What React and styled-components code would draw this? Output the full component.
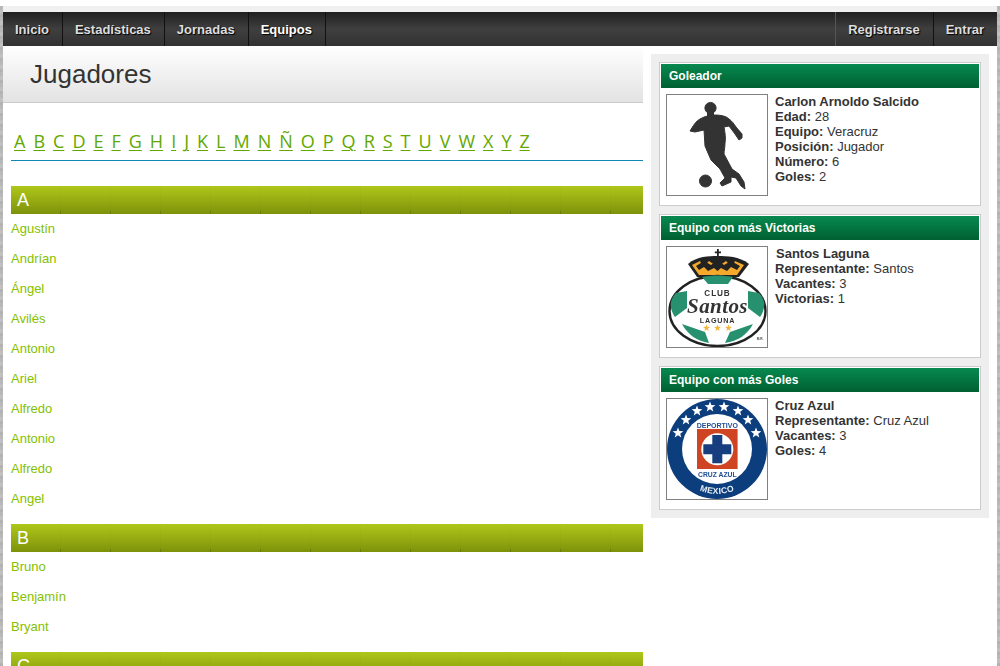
import React from "react";
import styled, { createGlobalStyle } from "styled-components";

const Global = createGlobalStyle`
  html, body { margin: 0; padding: 0; background: #fff; overflow: hidden; }
  body { font-family: "Liberation Sans", Arial, sans-serif; color: #333; }
  a { text-decoration: none; }
`;

const Page = styled.div`
  margin-top: 6px;
  height: 660px;
  overflow: hidden;
  padding: 0 3px;
  background:
    repeating-linear-gradient(0deg, rgba(0,0,0,.05) 0 3px, rgba(255,255,255,.06) 3px 7px, rgba(0,0,0,.02) 7px 11px),
    #bcbcbc;
`;
const Shell = styled.div`
  height: 100%;
  padding-top: 6px;
  background: linear-gradient(#f0f0f0 0 6px, #fff 6px);
`;
const Nav = styled.nav`
  display: flex;
  height: 34px;
  background: linear-gradient(#202020, #3f3f3f 50%, #323232);
`;
const NavItem = styled.a`
  display: flex;
  align-items: center;
  padding: 0 13px 0 12px;
  font-size: 13px;
  font-weight: 700;
  color: ${(p) => (p.$active ? "#fff" : "#ddd")};
  text-shadow: 1px 1px 1px #000;
  border-right: ${(p) => (p.$last ? "0" : "1px solid #111")};
  border-left: ${(p) => (p.$divider ? "1px solid #555" : "0")};
  margin-left: ${(p) => (p.$push ? "auto" : "0")};
`;
const Columns = styled.div`
  display: flex;
  gap: 8px;
  align-items: flex-start;
`;
const Main = styled.main`
  width: 640px;
  flex: none;
`;
const TitleBar = styled.header`
  height: 56px;
  padding-left: 27px;
  display: flex;
  align-items: center;
  background: linear-gradient(#fff, #e3e3e3);
  border-bottom: 1px solid #ccc;
  font-size: 26px;
  color: #333;
`;
const Body = styled.div`
  padding-left: 8px;
`;
const Alphabet = styled.div`
  margin-top: 25px;
  height: 33px;
  box-sizing: border-box;
  border-bottom: 1px solid #0e89b5;
  padding-left: 3px;
  display: flex;
  font-family: "Open Sans", sans-serif;
  font-size: 18px;
  line-height: 27px;
`;
const Letter = styled.a`
  color: #62a800;
  text-decoration: underline;
  text-underline-offset: 2px;
  text-decoration-thickness: 1px;
  margin-right: 8px;
`;
const SectionHead = styled.h2`
  margin: 0;
  height: 28px;
  padding-left: 6px;
  display: flex;
  align-items: center;
  font-size: 18px;
  font-weight: 400;
  color: #fff;
  background:
    repeating-linear-gradient(90deg, transparent 0 49px, rgba(0,0,0,.15) 49px 50px) 0 100% / 100% 3px no-repeat,
    repeating-linear-gradient(90deg, transparent 0 49px, rgba(0,0,0,.015) 49px 50px),
    linear-gradient(#afc71a, #7e920a);
`;
const Group = styled.section`
  margin-top: ${(p) => (p.$first ? "25px" : "10px")};
`;
const Name = styled.a`
  display: block;
  height: 30px;
  line-height: 30px;
  font-size: 13px;
  color: #84c100;
`;
const Side = styled.aside`
  width: 322px;
  padding: 8px;
  margin-top: 8px;
  background: #eee;
  display: flex;
  flex-direction: column;
  gap: 8px;
`;
const Card = styled.article`
  height: 144px;
  box-sizing: border-box;
  border: 1px solid #ccc;
  padding: 1px;
  background: #fff;
`;
const CardHead = styled.h3`
  margin: 0;
  height: 24px;
  line-height: 24px;
  padding-left: 8px;
  font-size: 12px;
  font-weight: 700;
  color: #fff;
  background: linear-gradient(#078950, #006030);
`;
const CardBody = styled.div`
  display: flex;
  gap: 7px;
  padding: 6px 0 0 5px;
`;
const Thumb = styled.div`
  width: 100px;
  height: 100px;
  flex: none;
  border: 1px solid #808080;
  background: #fff;
  overflow: hidden;
  svg { display: block; width: 100%; height: 100%; filter: blur(.35px); }
`;
const Info = styled.div`
  font-size: 13px;
  line-height: 15px;
  color: #333;
`;
const Line = styled.div`
  b { font-weight: 700; }
`;
const Heading = styled.div`
  font-weight: 700;
  padding-left: ${(p) => (p.$nudge ? "1px" : "0")};
`;

const starPath = (cx, cy, r) => {
  const pts = [];
  for (let i = 0; i < 10; i++) {
    const rad = i % 2 ? r * 0.42 : r;
    const a = -Math.PI / 2 + (i * Math.PI) / 5;
    pts.push(`${(cx + rad * Math.cos(a)).toFixed(2)},${(cy + rad * Math.sin(a)).toFixed(2)}`);
  }
  return pts.join(" ");
};

const Player = () => (
  <svg viewBox="0 0 100 100" aria-hidden="true">
    <g fill="#333" stroke="#333" strokeWidth="1" strokeLinejoin="round">
      <circle cx="43.5" cy="13" r="5.6" />
      <rect x="40.5" y="16" width="6" height="6" />
      <path d="M23 36 C26 31 29 26 33 24 C38 21 44 20 48 20 C54 20 59 21 62 24 C65 26 67 29 69 32 L75 39 L75 43 L72 45 L68 39 L62 31 L57 32 C58 38 59 43 58 48 C58 52 57 56 57 59 L65 74 L72 79 L77 87 L78 94 L74 91 L69 83 L64 82 L64 87 L55 91 L53 88 L58 83 L53 74 L44 65 L38 51 L37 35 L28 37 Z" />
      <circle cx="38.5" cy="86" r="6" />
    </g>
  </svg>
);

const Santos = () => (
  <svg viewBox="0 0 100 100" aria-hidden="true">
    <path d="M50 2 h1.8 v2.4 h2.2 v1.8 h-2.2 v3.4 h-1.8 v-3.4 h-2.2 v-1.8 h2.2 Z" fill="#222" />
    <path d="M21 17 C30 9 42 9 50.5 9 C60 9 72 9 82 17 L72 30 H30 Z" fill="#222" />
    <path d="M25 18 L33 14 L36 20 L42 14 L50.5 20 L59 14 L65 20 L68 14 L77 18 L70 28 H32 Z" fill="#f4a92c" />
    <path d="M29 19 L37 14 L44 18 L50.5 13 L57 18 L64 14 L73 19 L70 23 L64 20 L60 24 L54 21 L50.5 24 L47 21 L41 24 L37 20 L32 23 Z" fill="#222" />
    <ellipse cx="50.5" cy="64" rx="48" ry="35" fill="#fff" stroke="#222" strokeWidth="2.4" />
    <g fill="#27906f">
      <path d="M35 30 C45 28 56 28 66 30 L61 37 H41 Z" />
      <path d="M4 55 C5 51 7 48 9 46 L20 44 L20 61 L8 70 C5 66 3 60 4 55 Z" />
      <path d="M97 55 C96 51 94 48 92 46 L81 44 L81 61 L93 70 C96 66 98 60 97 55 Z" />
      <path d="M15 77 L38 85 L42 96 C30 94 21 88 15 77 Z" />
      <path d="M86 77 L63 85 L58 96 C71 94 80 88 86 77 Z" />
    </g>
    <text x="50.5" y="49" textAnchor="middle" fontFamily="Liberation Sans" fontWeight="700" fontSize="8.2" letterSpacing=".9" fill="#333">CLUB</text>
    <text x="50.5" y="66" textAnchor="middle" fontFamily="Liberation Serif" fontWeight="700" fontStyle="italic" fontSize="21" letterSpacing=".4" fill="#333">Santos</text>
    <text x="50.5" y="76" textAnchor="middle" fontFamily="Liberation Sans" fontWeight="700" fontSize="7.2" letterSpacing=".8" fill="#333">LAGUNA</text>
    <g fill="#f3b63b">
      <polygon points={starPath(39.5, 81, 3.6)} />
      <polygon points={starPath(50.5, 81, 3.6)} />
      <polygon points={starPath(61.5, 81, 3.6)} />
    </g>
    <text x="93" y="93" textAnchor="middle" fontFamily="Liberation Sans" fontWeight="700" fontSize="3.2" fill="#444">M.R.</text>
  </svg>
);

const CRUZ_STARS = [[11, 34], [19, 21], [30, 12], [43, 8], [57, 8], [71, 12], [81, 21], [89, 34]];

const Cruz = () => (
  <svg viewBox="0 0 100 100" aria-hidden="true">
    <defs>
      <path id="mx" d="M18.2 81.8 A45 45 0 0 0 81.8 81.8" />
    </defs>
    <circle cx="50" cy="50" r="50" fill="#0c3d7d" />
    <circle cx="50" cy="50" r="35" fill="#fff" />
    {CRUZ_STARS.map(([x, y]) => (
      <polygon key={x} points={starPath(x, y, 5.6)} fill="#fff" />
    ))}
    <text x="50.3" y="29" textAnchor="middle" fontFamily="Liberation Sans" fontWeight="700" fontSize="7" fill="#234f95">DEPORTIVO</text>
    <rect x="30" y="30" width="40.6" height="40" fill="#cf4524" />
    <circle cx="50.3" cy="50.3" r="16" fill="#fff" />
    <path d="M45.3 36 h10 v9.3 h9 v10 h-9 v9 h-10 v-9 h-9 v-10 h9 Z" fill="#173f7f" />
    <text x="50.3" y="77.5" textAnchor="middle" fontFamily="Liberation Sans" fontWeight="700" fontSize="6.8" fill="#234f95">CRUZ AZUL</text>
    <text fontFamily="Liberation Sans" fontWeight="700" fontSize="8.6" fill="#e8eef6" letterSpacing=".3">
      <textPath href="#mx" startOffset="50%" textAnchor="middle">MEXICO</textPath>
    </text>
  </svg>
);

const LETTERS = "ABCDEFGHIJKLMNÑOPQRSTUVWXYZ".split("");
const GROUPS = [
  { letter: "A", names: ["Agustín", "Andrían", "Ángel", "Avilés", "Antonio", "Ariel", "Alfredo", "Antonio", "Alfredo", "Angel"] },
  { letter: "B", names: ["Bruno", "Benjamín", "Bryant"] },
  { letter: "C", names: [] },
];
const CARDS = [
  {
    title: "Goleador", thumb: <Player />, heading: "Carlon Arnoldo Salcido",
    rows: [["Edad:", "28"], ["Equipo:", "Veracruz"], ["Posición:", "Jugador"], ["Número:", "6"], ["Goles:", "2"]],
  },
  {
    title: "Equipo con más Victorias", thumb: <Santos />, heading: "Santos Laguna", nudge: true,
    rows: [["Representante:", "Santos"], ["Vacantes:", "3"], ["Victorias:", "1"]],
  },
  {
    title: "Equipo con más Goles", thumb: <Cruz />, heading: "Cruz Azul",
    rows: [["Representante:", "Cruz Azul"], ["Vacantes:", "3"], ["Goles:", "4"]],
  },
];

export default function App() {
  return (
    <>
      <Global />
      <Page>
        <Shell>
          <Nav>
            <NavItem>Inicio</NavItem>
            <NavItem>Estadísticas</NavItem>
            <NavItem>Jornadas</NavItem>
            <NavItem $active>Equipos</NavItem>
            <NavItem $push $divider>Registrarse</NavItem>
            <NavItem $last>Entrar</NavItem>
          </Nav>
          <Columns>
            <Main>
              <TitleBar>Jugadores</TitleBar>
              <Body>
                <Alphabet>
                  {LETTERS.map((l) => <Letter key={l}>{l}</Letter>)}
                </Alphabet>
                {GROUPS.map((g, i) => (
                  <Group key={g.letter} $first={i === 0}>
                    <SectionHead>{g.letter}</SectionHead>
                    {g.names.map((n, j) => <Name key={j}>{n}</Name>)}
                  </Group>
                ))}
              </Body>
            </Main>
            <Side>
              {CARDS.map((c) => (
                <Card key={c.title}>
                  <CardHead>{c.title}</CardHead>
                  <CardBody>
                    <Thumb>{c.thumb}</Thumb>
                    <Info>
                      <Heading $nudge={c.nudge}>{c.heading}</Heading>
                      {c.rows.map(([k, v]) => (
                        <Line key={k}><b>{k}</b> {v}</Line>
                      ))}
                    </Info>
                  </CardBody>
                </Card>
              ))}
            </Side>
          </Columns>
        </Shell>
      </Page>
    </>
  );
}
